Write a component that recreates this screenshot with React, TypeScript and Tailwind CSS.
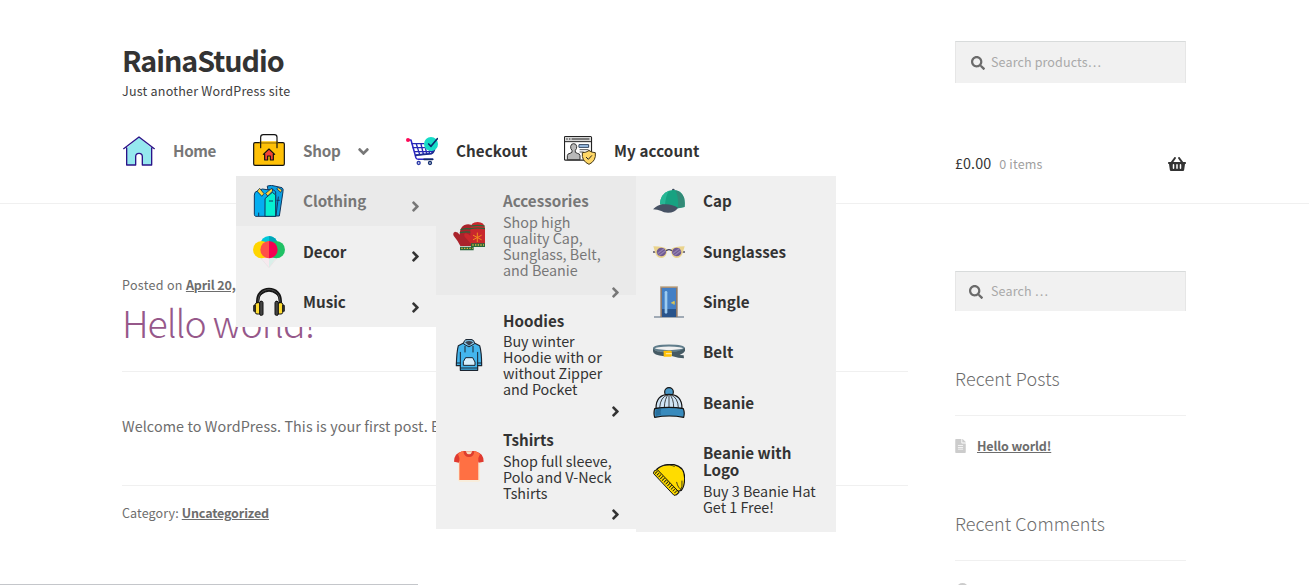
import React from 'react';
import { FaAngleDown, FaAngleRight, FaSearch, FaShoppingBasket, FaFileAlt } from 'react-icons/fa';

function Icon({ children }: { children: React.ReactNode }) {
  return (
    <svg viewBox="0 0 96 96" className="block size-8 shrink-0" fill="none" strokeLinejoin="round" strokeLinecap="round">
      {children}
    </svg>
  );
}

const HomeIcon = () => (
  <Icon>
    <path d="M11 42v51h27V68a10 10 0 0 1 20 0v25h28V42L48 10z" fill="#95e8ef" />
    <path d="M2 44 48 9l46 35M11 42v51h27V68a10 10 0 0 1 20 0v25h28V42" stroke="#2b1388" strokeWidth="4" />
  </Icon>
);

const BagIcon = () => (
  <Icon>
    <rect x="2" y="26" width="92" height="68" rx="4" fill="#ffc107" stroke="#111" strokeWidth="3.5" />
    <path d="M22 24h51" stroke="#ffc107" strokeWidth="5" />
    <path d="M23 41V10q0-8 8-8h33q8 0 8 8v31" stroke="#111" strokeWidth="3.5" />
    <path d="M35 60v18h9V66h8v12h9V60L48 46z" fill="#f44336" />
    <path d="M31 61 48 45l17 16M35 60v18h9V66h8v12h9V60" stroke="#111" strokeWidth="3.5" />
  </Icon>
);

const CartIcon = () => (
  <Icon>
    <path d="M6 15h9l15 54q2 4 7 4h43" stroke="#2b22c8" strokeWidth="4.5" />
    <path d="M18 26h36M21 38h38M26 50h56M31 60l46-5 6-13M31 27l10 32M45 27l7 30M59 42l3 14M72 46l-3 10" stroke="#2428b5" strokeWidth="4" />
    <path d="M29 61l48-5q7-3 9-15" stroke="#1b2c8c" strokeWidth="4.5" />
    <path d="M54 73h26" stroke="#102a64" strokeWidth="5" />
    <circle cx="38" cy="84" r="4.5" stroke="#2b3aa8" strokeWidth="4" fill="#fff" />
    <circle cx="72" cy="84" r="4.5" stroke="#153070" strokeWidth="4" fill="#fff" />
    <circle cx="75" cy="27" r="21" fill="#16dcc7" />
    <path d="M68 27l7 7 19-23" stroke="#0b2a6b" strokeWidth="5" />
    <circle cx="6" cy="15" r="6" fill="#ff0a55" />
  </Icon>
);

const AccountIcon = () => (
  <Icon>
    <rect x="1.5" y="4.500" width="81" height="71" rx="3" fill="#fff" stroke="#222" strokeWidth="3.5" />
    <path d="M3 6h78v13H3z" fill="#d8d8d8" />
    <path d="M2 20h80" stroke="#222" strokeWidth="3" />
    <path d="M8 12h2M16 12h2M24 12h51" stroke="#222" strokeWidth="3" />
    <path d="M10 73V62q0-6 8-7l6-3v-6q-5-5-4-12 1-8 9-8t9 8q1 7-4 12v6l6 3q8 1 8 7v11z" fill="#b9b9b9" stroke="#333" strokeWidth="3" />
    <path d="M46 29h28v8H46z" fill="#a6cdf5" stroke="#2a3d57" strokeWidth="3" />
    <path d="M48 44h24M48 51h10" stroke="#333" strokeWidth="2.500" />
    <path d="M75 47q9 6 19 6 3 25-19 35-23-10-20-35 11 0 20-6z" fill="#ffd766" stroke="#443716" strokeWidth="3" />
    <path d="M67 67l6 6 10-11" stroke="#222" strokeWidth="3" />
  </Icon>
);

const ClothingIcon = () => (
  <Icon>
    <path d="M44 3l11-2 32 7q5 3 3 12L79 93H60z" fill="#0a9fe0" stroke="#12375e" strokeWidth="3" />
    <path d="M4 29q0-9 9-11l15-6 14 2 18 0 8 6v74H8q-4-1-4-5z" fill="#05aef0" stroke="#12375e" strokeWidth="3" />
    <path d="M37 40 58 22l10 8v64H37z" fill="#06efd1" stroke="#12375e" strokeWidth="3" />
    <path d="M17 84v8M76 36l-7 56" stroke="#12375e" strokeWidth="3" />
    <path d="M13 18l7-8 13 16-6 7zM56 10l-18 15 6 8 14-14z" fill="#ffd43c" stroke="#12375e" strokeWidth="2.500" />
    <path d="M76 8l11 7-4 7-11-10z" fill="#ffd43c" stroke="#12375e" strokeWidth="2.500" />
    <path d="M49 48h10M72 46h7" stroke="#12375e" strokeWidth="3" />
  </Icon>
);

const DecorIcon = () => (
  <Icon>
    <path d="M26 65l22 30V65z" fill="#f7e9ee" />
    <path d="M70 65L48 95V65z" fill="#d9efe9" />
    <path d="M22 65l26 30 25-30" stroke="#e9dfe2" strokeWidth="2" />
    <circle cx="48" cy="26" r="26" fill="#00c8da" />
    <path d="M48 0a26 26 0 0 1 26 26H48z" fill="#00a6b8" />
    <circle cx="26" cy="41" r="26" fill="#ffd500" />
    <circle cx="70" cy="41" r="26" fill="#20c165" />
    <path d="M48 15a26 26 0 0 0 0 52z" fill="#ff5148" />
    <path d="M48 15a26 26 0 0 1 0 52z" fill="#f50052" />
  </Icon>
);

const MusicIcon = () => (
  <Icon>
    <path d="M14 54V46C14 24 28 10 48 10s34 14 34 36v8" stroke="#151515" strokeWidth="10" />
    <path d="M15 47C15 25 29 11 48 11s33 14 33 36" stroke="#666" strokeWidth="2" />
    <path d="M24 25Q48 5 72 25" stroke="#151515" strokeWidth="4" />
    <rect x="1" y="57" width="8" height="20" rx="4" fill="#333" stroke="#111" strokeWidth="2" />
    <rect x="87" y="57" width="8" height="20" rx="4" fill="#333" stroke="#111" strokeWidth="2" />
    <rect x="7" y="50" width="15" height="34" rx="5" fill="#ffdc32" stroke="#111" strokeWidth="3" />
    <rect x="74" y="50" width="15" height="34" rx="5" fill="#ffdc32" stroke="#111" strokeWidth="3" />
    <rect x="20" y="46" width="10" height="42" rx="4" fill="#444" stroke="#111" strokeWidth="3" />
    <rect x="66" y="46" width="10" height="42" rx="4" fill="#444" stroke="#111" strokeWidth="3" />
  </Icon>
);

const MittensIcon = () => (
  <Icon>
    <path d="M22 78Q16 64 2 47q-4-9 4-12 9 0 14 9 0-20 13-28 16-7 28 3L60 78z" fill="#a9232b" />
    <path d="M24 29q18-6 36 0M22 38q18-5 38 0" stroke="#27683c" strokeWidth="3.500" />
    <path d="M54 72Q45 60 35 50q-4-9 4-10 8 2 13 7V27Q52 6 74 6q20 0 22 18v48z" fill="#c9282d" />
    <path d="M54 18q20-4 40 0M52 26q22-4 44 0" stroke="#27683c" strokeWidth="3.500" />
    <path d="M73 39v26M61 46l24 13M85 46L61 59" stroke="#f28c1e" strokeWidth="3" />
    <path d="M21 80h41v11H21zM54 70h42v11H54z" fill="#27683c" />
    <path d="M25 85h34M58 75h35" stroke="#e2b63d" strokeWidth="4" strokeDasharray="4 4" strokeLinecap="butt" />
  </Icon>
);

const HoodieIcon = () => (
  <Icon>
    <path d="M32 12L16 20q-5 18-6 60h12v14h52V80h12q0-40-6-60L64 12l-8-10H40z" fill="#43b5ed" stroke="#1b2430" strokeWidth="3.500" />
    <path d="M32 14Q32 2 42 2h13q9 0 10 12L49 23z" fill="#8bd1f5" stroke="#1b2430" strokeWidth="3" />
    <path d="M36 10q12-8 25 0L48 20z" fill="#3a4350" />
    <path d="M22 40v40M74 40v40M36 22v17M60 22v17M22 87h52M10 72h12M74 72h12" stroke="#1b2430" strokeWidth="3" />
    <path d="M39 56h20l7 13v10H31V69z" fill="#d7eefb" stroke="#1b2430" strokeWidth="3" />
  </Icon>
);

const TshirtIcon = () => (
  <Icon>
    <path d="M16 34l-2 5 4 2v52h61V41l6-2" stroke="#ffeac8" strokeWidth="3" />
    <path d="M29 3Q15 8 9 14 3 22 3 35l15 3 8-18zM66 3q14 5 20 11 6 8 6 21l-15 3-8-18z" fill="#e03a2f" />
    <path d="M29 3Q19 7 15 12q6 12 4 22v56h57V34q-2-10 5-22-5-5-15-9z" fill="#ff7043" />
    <path d="M31 3q2 18 17 18T64 3z" fill="#dd3d2e" />
    <path d="M38 4q3 9 10 9t10-9z" fill="#f7dcc0" />
  </Icon>
);

const CapIcon = () => (
  <Icon>
    <circle cx="61" cy="15" r="4" fill="#39475a" />
    <path d="M21 58Q22 26 48 17q34-8 44 20 5 15 2 29L70 71z" fill="#17a281" />
    <path d="M21 58Q22 26 48 17q-10 16-12 42z" fill="#27b795" />
    <path d="M66 16q22 4 28 24 2 14 1 26l-20 3Q78 32 66 16z" fill="#328a77" />
    <path d="M0 73q14-14 29-15 26-3 46 10-9 15-30 15-14 0-20-5-12-5-25-5z" fill="#465163" />
  </Icon>
);

const SunglassesIcon = () => (
  <Icon>
    <path d="M0 48h7M89 48h7" stroke="#555061" strokeWidth="5" />
    <path d="M1 31q17 0 29 3 13 2 12 13-3 18-17 19Q11 66 6 48 3 38 1 31zM95 31q-17 0-29 3-13 2-12 13 3 18 17 19 14 0 19-18 3-10 5-17z" fill="#ead38b" />
    <path d="M41 43q7-4 14 0" stroke="#454152" strokeWidth="4" />
    <ellipse cx="25" cy="48" rx="14" ry="13" fill="#705a91" />
    <ellipse cx="71" cy="48" rx="14" ry="13" fill="#705a91" />
    <path d="M15 52l17-13M19 58l17-13M61 52l17-13M65 58l17-13" stroke="#9382b2" strokeWidth="4" />
  </Icon>
);

const DoorIcon = () => (
  <Icon>
    <path d="M3 93h90" stroke="#50657a" strokeWidth="3" strokeLinecap="butt" />
    <path d="M22 1h52v92H22z" fill="#8e7869" />
    <path d="M22 1h52v3H22z" fill="#d9c6a4" />
    <path d="M27 6h42v87H27z" fill="#437fc5" />
    <path d="M27 69h42v24H27z" fill="#29548c" />
    <path d="M39 19v60" stroke="#9ccbf1" strokeWidth="8" />
    <path d="M56 50l8-4v8z" fill="#e8ca4b" stroke="#e8ca4b" strokeWidth="2" />
  </Icon>
);

const BeltIcon = () => (
  <Icon>
    <path d="M2 36Q8 47 34 49l30 0q26-2 30-12" stroke="#546e7a" strokeWidth="2" />
    <ellipse cx="48" cy="37" rx="45" ry="8.500" stroke="#607d8b" strokeWidth="6" />
    <path d="M0 37q4 10 34 12v12Q0 58 0 46z" fill="#455a64" />
    <path d="M56 48q28-1 40-12v9q-4 8-16 12l12 1 1 9-17-2-20-5z" fill="#455a64" />
    <rect x="32" y="44" width="24" height="18" rx="2" fill="#ffc107" />
    <path d="M40 53h15" stroke="#ffe69a" strokeWidth="4" />
  </Icon>
);

const BeanieIcon = () => (
  <Icon>
    <circle cx="48" cy="15" r="13" fill="#4a98c6" stroke="#111" strokeWidth="3.500" />
    <path d="M9 64Q9 22 48 22t39 42z" fill="#cfe4f5" stroke="#111" strokeWidth="3.500" />
    <path d="M44 23Q22 30 20 61M46 23Q35 33 34 61M48 23v38M50 23q12 10 12 38M53 23q22 8 23 38" stroke="#222" strokeWidth="2.500" />
    <path d="M5 65q43-8 86 0 5 12 1 26-43-8-87 0-4-12 0-26z" fill="#398bbd" stroke="#111" strokeWidth="3.500" />
    <path d="M9 68q6-3 16-3-4 10-1 19-9 0-15 3-3-10 0-19z" fill="#286f9d" />
  </Icon>
);

const LogoBeanieIcon = () => (
  <Icon>
    <path d="M12 15Q33-2 63 2q33 7 32 43-1 24-10 34L67 84 10 24z" fill="#ffdc00" stroke="#111" strokeWidth="3.500" />
    <path d="M30 5q20-5 34 2M71 55q4 18 14 22M87 51q2 18-4 28" stroke="#222" strokeWidth="2.500" />
    <path d="M12 17q-10 0-11 11l62 66q8 1 15-8z" fill="#ffdc00" stroke="#111" strokeWidth="3" />
    <path d="M9 24l66 66" stroke="#111" strokeWidth="11" strokeDasharray="2.500 5" strokeLinecap="butt" />
  </Icon>
);

type Item = {
  title: string;
  note?: string;
  icon: React.ReactNode;
  arrow?: boolean;
  active?: boolean;
  height: string;
  text?: string;
};

function Panel({ items, className }: { items: Item[]; className: string }) {
  return (
    <ul className={`absolute top-[176px] z-10 w-[200px] bg-[#f0f0f0] ${className}`}>
      {items.map((item) => (
        <li
          key={item.title}
          className={`relative flex items-start pl-[17px] ${item.height} ${item.active ? 'bg-[#eaeaea] text-[#777]' : 'text-[#333]'}`}
        >
          <div className={`flex items-center gap-[18px] ${item.note ? 'pt-[17px]' : 'pt-[9px]'}`}>
            {item.icon}
            <div className={`w-[117px] ${item.text ?? ''}`}>
              <div className="text-[15.200px] leading-[17px] font-bold">{item.title}</div>
              {item.note && <p className="mt-[4px] text-[14.330px] leading-[16px]">{item.note}</p>}
            </div>
          </div>
          {item.arrow && <FaAngleRight className="absolute right-[12px] bottom-[-6px] size-[17px]" />}
        </li>
      ))}
    </ul>
  );
}

const clothing: Item[] = [
  { title: 'Clothing', icon: <ClothingIcon />, arrow: true, active: true, height: 'h-[50px] [&>svg]:bottom-[11px]', text: 'pb-[2px]' },
  { title: 'Decor', icon: <DecorIcon />, arrow: true, height: 'h-[50px] pt-px [&>svg]:bottom-[11px]', text: 'pb-[2px]' },
  { title: 'Music', icon: <MusicIcon />, arrow: true, height: 'h-[51px] pt-px [&>svg]:bottom-[11px]', text: 'pb-[2px]' },
];

const accessories: Item[] = [
  { title: 'Accessories', note: 'Shop high quality Cap, Sunglass, Belt, and Beanie', icon: <MittensIcon />, arrow: true, active: true, height: 'h-[119px]', text: '-mt-px [&>p]:mt-[5px]' },
  { title: 'Hoodies', note: 'Buy winter Hoodie with or without Zipper and Pocket', icon: <HoodieIcon />, arrow: true, height: 'h-[119px]' },
  { title: 'Tshirts', note: 'Shop full sleeve, Polo and V-Neck Tshirts', icon: <TshirtIcon />, arrow: true, height: 'h-[115px] [&>svg]:bottom-[6px]', text: '[&>p]:mt-[5px]' },
];

const caps: Item[] = [
  { title: 'Cap', icon: <CapIcon />, height: 'h-[50px]', text: 'pb-[2px]' },
  { title: 'Sunglasses', icon: <SunglassesIcon />, height: 'h-[51px] pt-px', text: 'pb-[2px]' },
  { title: 'Single', icon: <DoorIcon />, height: 'h-[50px]', text: 'pb-[2px]' },
  { title: 'Belt', icon: <BeltIcon />, height: 'h-[50px]', text: 'pb-[2px]' },
  { title: 'Beanie', icon: <BeanieIcon />, height: 'h-[51px] pt-px', text: 'pb-[2px]' },
  { title: 'Beanie with Logo', note: 'Buy 3 Beanie Hat Get 1 Free!', icon: <LogoBeanieIcon />, height: 'h-[104px]', text: '-mt-px [&>p]:mt-[5px]' },
];

function NavItem({ icon, label, className }: { icon: React.ReactNode; label: string; className: string }) {
  return (
    <a className={`flex items-center gap-[18px] text-[15.200px] leading-[20px] font-bold ${className}`}>
      {icon}
      <span>{label}</span>
    </a>
  );
}

function Search({ label, className }: { label: string; className: string }) {
  return (
    <div className={`flex items-center border border-b-0 border-[#e6e6e6] border-t-[#d8dbdb] bg-[#f1f1f1] text-[12.540px] text-[#a9a9a9] ${className}`}>
      <FaSearch className="size-[14px] shrink-0 text-[#6b6b6b]" />
      <span className="pb-[2px] leading-[20px] tracking-[0.120px]">{label}</span>
    </div>
  );
}

export default function App() {
  return (
    <div className="relative h-[585px] w-[1309px] overflow-hidden bg-white font-['Noto_Sans_CJK_SC','Noto_Sans',sans-serif] text-[14.330px] text-[#6d6d6d]">
      <header className="flex h-[204px] border-b border-[#f0f0f0] pl-[122px]">
        <div className="w-[833px] pt-[41px]">
          <h1 className="text-[28.700px] leading-[38px] font-bold tracking-[-1.020px] text-[#333]">RainaStudio</h1>
          <p className="mt-[2px] text-[12.540px] leading-[20px] tracking-[0.220px] text-[#404040]">Just another WordPress site</p>
          <nav className="mt-[33px] flex h-8 items-center pl-px">
            <NavItem icon={<HomeIcon />} label="Home" className="w-[130px] tracking-[-0.350px] text-[#777]" />
            <div className="flex w-[153px] items-center">
              <NavItem icon={<BagIcon />} label="Shop" className="w-[102px] tracking-[-0.200px] text-[#777]" />
              <FaAngleDown className="mt-[2px] size-[17px] text-[#777]" />
            </div>
            <NavItem icon={<CartIcon />} label="Checkout" className="w-[158px] tracking-[0.080px] text-[#333] [&>svg]:translate-y-px" />
            <NavItem icon={<AccountIcon />} label="My account" className="tracking-[0.100px] text-[#333] [&>svg]:translate-y-px" />
          </nav>
        </div>
        <div className="w-[231px] pt-[41px]">
          <Search label="Search products…" className="h-[42px] gap-[6px] pl-[15px]" />
          <div className="mt-[69px] flex h-[22px] items-center leading-[22px]">
            <span className="tracking-[0.100px] text-[#333]">£0.00</span>
            <span className="mt-px ml-2 text-[12.540px] tracking-[0.150px] text-[#a0a0a0]">0 items</span>
            <FaShoppingBasket className="mt-[2px] ml-auto size-[18px] text-[#333]" />
          </div>
        </div>
      </header>

      <Panel items={clothing} className="left-[236px]" />
      <Panel items={accessories} className="left-[436px]" />
      <Panel items={caps} className="left-[636px]" />

      <div className="flex pl-[122px]">
        <main className="w-[786px] pt-[71px] whitespace-nowrap">
          <p className="text-[12.540px] leading-[20px]">
            <span className="tracking-[0.300px]">Posted on </span>
            <a className="font-bold tracking-[-0.150px] underline">April 20, 2020</a>
          </p>
          <h2 className="mt-[2px] text-[37.500px] leading-[50px] font-light tracking-[-1.080px] text-[#96588a]">Hello world!</h2>
          <div className="mt-[24px] flex h-[115px] items-center border-y border-[#f0f0f0] pb-[6px]">
            <p className="leading-[26px] tracking-[0.095px]">Welcome to WordPress. This is your first post. Edit or delete it, then start writing!</p>
          </div>
          <p className="mt-[17px] text-[12.540px] leading-[20px]">
            <span className="tracking-[0.100px]">Category: </span>
            <a className="font-bold tracking-[-0.150px] underline">Uncategorized</a>
          </p>
        </main>
        <aside className="ml-[47px] w-[231px] pt-[67px]">
          <Search label="Search …" className="h-[40px] gap-[8px] pl-[13px]" />
          <h3 className="mt-[53px] h-[52px] border-b border-[#f0f0f0] text-[18px] leading-[28px] font-light tracking-[0.150px]">Recent Posts</h3>
          <div className="mt-[19px] flex items-center gap-[11px] text-[12.540px] leading-[22px]">
            <FaFileAlt className="h-[14px] w-[11px] text-[#ccc]" />
            <a className="font-bold tracking-[-0.150px] underline">Hello world!</a>
          </div>
          <h3 className="mt-[52px] h-[52px] border-b border-[#f0f0f0] text-[18px] leading-[28px] font-light tracking-[0.080px]">Recent Comments</h3>
          <div className="mt-[22px] ml-[2px] h-[10px] w-[11px] rounded-[50%] bg-[#ccc]" />
        </aside>
      </div>
      <div className="absolute bottom-0 left-0 h-px w-[418px] bg-[#c4c6ca]" />
    </div>
  );
}
